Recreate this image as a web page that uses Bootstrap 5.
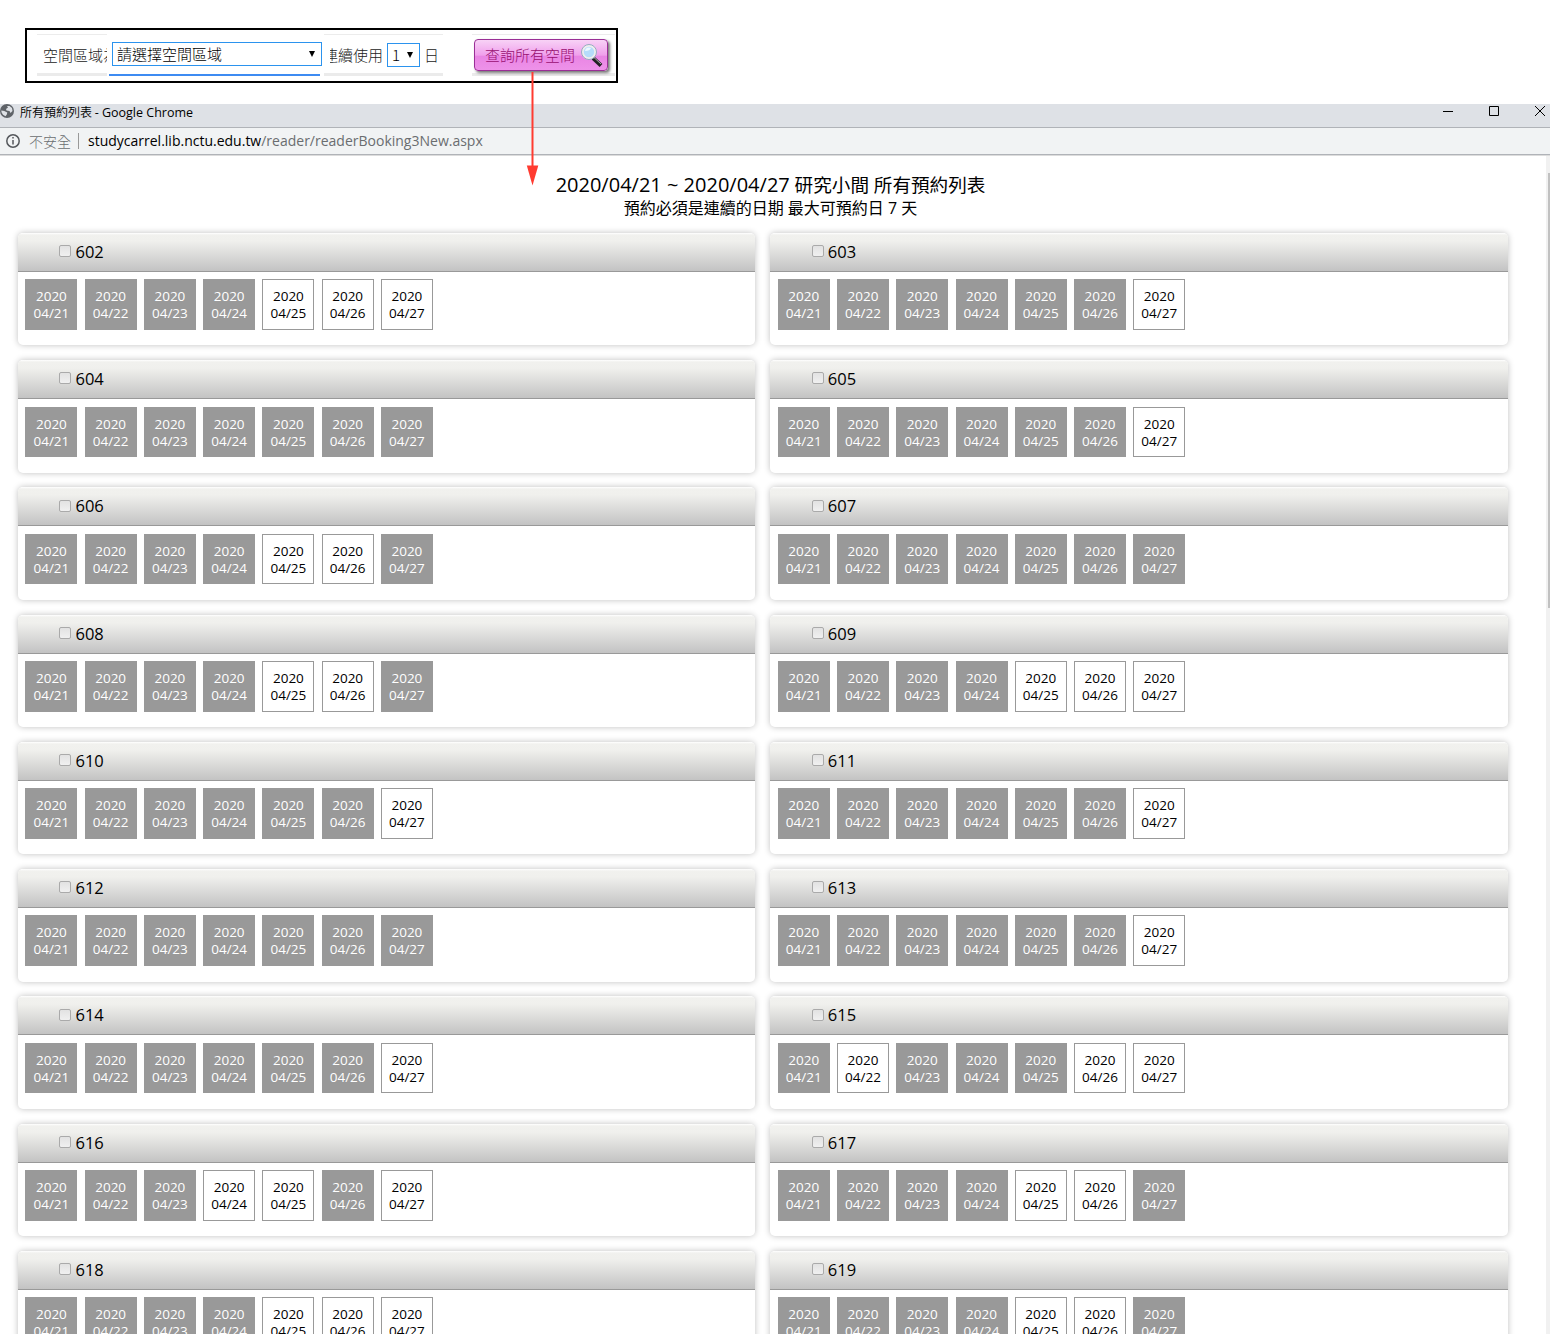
<!DOCTYPE html>
<html lang="zh-Hant">
<head>
<meta charset="utf-8">
<title>所有預約列表</title>
<link href="https://cdn.jsdelivr.net/npm/bootstrap@5.3.0/dist/css/bootstrap.min.css" rel="stylesheet">
<style>
body{font-family:"Open Sans","Noto Sans CJK TC",sans-serif;color:#000;background:#fff;height:1334px;overflow:hidden}
.cjk{font-family:"Noto Sans CJK TC",sans-serif;font-weight:300}
.latin{font-family:"Open Sans",sans-serif}
.query-wrap{height:104px;padding:28px 0 0 25px}
.query-box{width:593px;height:55px;border:2px solid #000;line-height:24px;font-size:15px;padding-left:10px}
.strip{height:42px;border-top:1px solid #ececec;border-bottom:3px solid #ebebeb;margin-top:4px;color:#222}
.strip-area{width:70px;padding:1px 0 0 6px}
.area-wrap{width:211px;height:42px;border-bottom:2px solid #3d8bf2;margin:4px 0 0 2px;padding:0 0 1px 3px}
.pick{border:1px solid #2b93ee;background:#fff;height:24px;line-height:22px;color:#000;white-space:nowrap}
.pick-area{width:210px;padding:0 6px 0 4px}
.pick-days{width:33px;padding:0 6px 0 4px;margin:0 4px 0 4px}
.caret{width:6px;height:6px}
.strip-days{width:119px;margin-left:4px;padding:1px 0 0 6px}
.clip-start{width:53px}
.strip-btn{width:143px;margin-left:29px}
.find{width:134px;height:32px;margin:4px 0 0 2px;padding:0 4px 0 10px;border:1px solid #9a2f96;border-radius:4px;color:#990f70;background:linear-gradient(#f8d2f6,#f0a0ec 50%,#e985e4 55%,#ee92e9);box-shadow:2px 2px 3px #777;font-size:15px;line-height:30px;white-space:nowrap}
.arrow{left:526px;top:72px;z-index:5}
.titlebar{height:24px;background:#dee1e6;border-bottom:1px solid #b0b3b8;font-size:12px;line-height:15px}
.tab-name{padding-left:6px;font-weight:350}
.tab-name .latin{font-size:12.5px;font-weight:400}
.addr{height:27px;background:#f1f3f4;border-bottom:1px solid #b0b3b8;font-size:14px;line-height:26px;color:#6a6d70;padding-left:6px}
.insecure{padding-left:9px}
.sep{width:1px;height:16px;background:#999;margin:0 9px 0 7px}
.win{position:relative;height:1179px;overflow:hidden;border-top:1px solid #dcdcdc}
.track{right:0;top:0;width:4px;height:1178px;background:#f1f1f1}
.thumb{right:0;top:17px;width:2px;height:435px;background:#c1c1c1}
.heading{width:1541px;height:77px;padding-top:17px;font-size:18.6px;line-height:24px}
.heading .latin{font-size:20px}
.heading .sub{font-size:16px;line-height:22px}
.rooms{padding-left:18px;column-gap:15.2px;row-gap:14.85px}
.room{width:737.2px;height:112.4px;border-radius:5px;background:#fff;box-shadow:0 0 6px rgba(0,0,0,.25);overflow:hidden}
.room-head{height:39px;border-bottom:1px solid #999;background:linear-gradient(#fff 0,#f1f1ee 2px,#f0f0ed 8px,#c3c3c3);padding-left:41.3px;font-size:16.5px;line-height:38px}
.box{width:12px;height:12px;border:1px solid #aaa;border-radius:2px;background:linear-gradient(#e2e2e2,#f0f0f0);margin:0 4.2px 1.5px 0}
.days{padding:7.3px 0 0 7.4px;gap:7.25px}
.day{width:52px;height:50.6px;border:1px solid #999;font-size:13.5px;line-height:17px;padding-top:8px}
.full{background:#999;color:#fff}
</style>
<script src="https://cdn.jsdelivr.net/npm/bootstrap@5.3.0/dist/js/bootstrap.bundle.min.js"></script>
</head>
<body>
<div class="query-wrap">
  <div class="query-box d-flex align-items-start cjk">
    <div class="strip strip-area d-flex align-items-center overflow-hidden text-nowrap">空間區域為</div>
    <div class="area-wrap d-flex align-items-center"><div class="pick pick-area flex-shrink-0 d-flex align-items-center justify-content-between">請選擇空間區域<svg class="caret" viewBox="0 0 6 6"><path d="M0 0h6L3 6z"/></svg></div></div>
    <div class="strip strip-days d-flex align-items-center"><div class="clip-start d-flex justify-content-end overflow-hidden text-nowrap">連續使用</div><div class="pick pick-days d-flex align-items-center justify-content-between">1<svg class="caret" viewBox="0 0 6 6"><path d="M0 0h6L3 6z"/></svg></div>日</div>
    <div class="strip strip-btn"><div class="find d-flex align-items-center justify-content-between">查詢所有空間
      <svg width="22" height="24" viewBox="0 0 22 24"><path d="M12 15l8 7.500" stroke="#222" stroke-width="4"/><path d="M13 14.500l7 6.500" stroke="#aaa" stroke-width="1"/><circle cx="8" cy="9" r="6.500" fill="#b5dcfa" stroke="#eee" stroke-width="2.500"/><circle cx="8" cy="9" r="7.500" fill="none" stroke="#8299b5" stroke-width=".8"/><path d="M4 8a4 4 0 0 1 6-3q-1 3-6 3" fill="#edf8ff"/></svg></div></div>
  </div>
</div>
<svg class="arrow position-absolute" width="13" height="115" viewBox="0 0 13 115"><path d="M6.500 0v95" stroke="#ff3b30" stroke-width="2"/><path d="M.8 93.500h11.500L6.500 113.500z" fill="#ff3b30"/></svg>
<div class="titlebar d-flex align-items-start">
  <svg width="14" height="16" viewBox="0 0 14 16"><circle cx="7" cy="7" r="7" fill="#5f6368"/><path d="M7 2l1 1.500-2 1.500.5 1.500 3 .5 1 2 2-2-.5-3-2.500-2zM1.300 6.500l3 .5 3 1.500-.5 2-1.300 1.800-2.500-1.500-1.500-2.500z" fill="#dee1e6"/></svg>
  <span class="tab-name me-auto cjk">所有預約列表 <span class="latin">- Google Chrome</span></span>
  <svg width="107" height="16" viewBox="0 0 107 16" fill="none" stroke="#000"><path d="M0 7.500h10M46.500 2.500h9v9h-9zM92 2l10 10M102 2l-10 10"/></svg>
</div>
<div class="addr d-flex align-items-center">
  <svg width="14" height="14" viewBox="0 0 14 14" fill="none" stroke="#55585c" stroke-width="1.500"><circle cx="7" cy="7" r="6.200"/><path d="M7 6v4.500M7 3v1.600"/></svg>
  <span class="cjk insecure">不安全</span><span class="sep"></span><span><span class="text-black">studycarrel.lib.nctu.edu.tw</span>/reader/readerBooking3New.aspx</span>
</div>
<main class="win">
  <div class="heading text-center"><div><span class="latin">2020/04/21 ~ 2020/04/27</span> 研究小間 所有預約列表</div><div class="sub">預約必須是連續的日期 最大可預約日 7 天</div></div>
  <div class="rooms d-flex flex-wrap" id="rooms"></div>
  <div class="track position-absolute"></div><div class="thumb position-absolute"></div>
</main>
<script>
// One flag per day, 21 to 27 April: 1 = already booked, 0 = free
const rooms = {602:'1111000',603:'1111110',604:'1111111',605:'1111110',606:'1111001',607:'1111111',608:'1111001',609:'1111000',610:'1111110',611:'1111110',612:'1111111',613:'1111110',614:'1111110',615:'1011100',616:'1110010',617:'1111001',618:'1111000',619:'1111001'};
document.getElementById('rooms').innerHTML = Object.entries(rooms).map(([n,f]) =>
 `<section class="room"><div class="room-head d-flex align-items-center"><span class="box"></span>${n}</div><div class="days d-flex">${[...f].map((v,i)=>`<div class="day text-center ${v==='1'?'full':''}">2020<br>04/${21+i}</div>`).join('')}</div></section>`).join('');
</script>
</body>
</html>
